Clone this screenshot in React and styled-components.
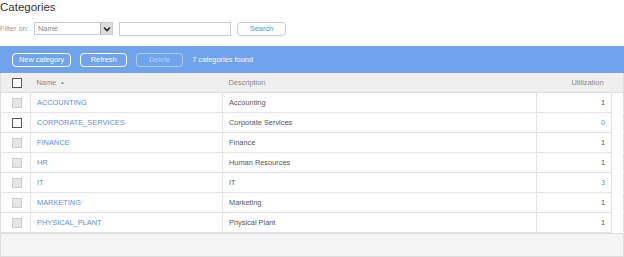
import React from "react";
import styled, { createGlobalStyle } from "styled-components";

const categories = [
  { name: "ACCOUNTING", desc: "Accounting", use: 1, active: false },
  { name: "CORPORATE_SERVICES", desc: "Corporate Services", use: 0, active: true },
  { name: "FINANCE", desc: "Finance", use: 1, active: false },
  { name: "HR", desc: "Human Resources", use: 1, active: false },
  { name: "IT", desc: "IT", use: 3, active: false },
  { name: "MARKETING", desc: "Marketing", use: 1, active: false },
  { name: "PHYSICAL_PLANT", desc: "Physical Plant", use: 1, active: false },
];

const App = () => {
  return (
    <>
      <Global />
      <Page>
        <Title>Categories</Title>
        <FilterRow>
          <FilterLabel>Filter on:</FilterLabel>
          <SelectBox>
            <SelectText>Name</SelectText>
            <SelectBtn>
              <svg width="8" height="6" viewBox="0 0 8 6">
                <path d="M1 1.5 L4 4.5 L7 1.5" fill="none" stroke="#222" strokeWidth="1.6" />
              </svg>
            </SelectBtn>
          </SelectBox>
          <TextInput />
          <SearchBtn>Search</SearchBtn>
        </FilterRow>

        <Toolbar>
          <ToolBtn>New category</ToolBtn>
          <ToolBtn>Refresh</ToolBtn>
          <ToolBtn disabled>Delete</ToolBtn>
          <Found>7 categories found</Found>
        </Toolbar>

        <Grid>
          <colgroup>
            <col style={{ width: 30 }} />
            <col style={{ width: 192 }} />
            <col style={{ width: 314 }} />
            <col style={{ width: 75 }} />
            <col />
          </colgroup>
          <thead>
            <tr>
              <Th>
                <Check $on />
              </Th>
              <Th>
                Name <Arrow>▲</Arrow>
              </Th>
              <Th>Description</Th>
              <Th $right>Utilization</Th>
              <Th />
            </tr>
          </thead>
          <tbody>
            {categories.map((c) => (
              <tr key={c.name}>
                <Td>
                  <Check $on={c.active} />
                </Td>
                <Td $link>{c.name}</Td>
                <Td>{c.desc}</Td>
                <Td $right $link={c.use !== 1}>
                  {c.use}
                </Td>
                <Filler />
              </tr>
            ))}
          </tbody>
        </Grid>
        <Footer />
      </Page>
    </>
  );
};

export default App;
//
const Global = createGlobalStyle`
  body {
    margin: 0;
    background: #fff;
    font-family: "Liberation Sans", Arial, sans-serif;
  }
`;
const Page = styled.div`
  width: 624px;
`;
const Title = styled.h1`
  margin: 0;
  font-size: 11.5px;
  font-weight: normal;
  line-height: 15px;
  color: #333;
`;
const FilterRow = styled.div`
  display: flex;
  align-items: center;
  height: 15px;
  margin-top: 6px;
  font-size: 7.4px;
`;
const FilterLabel = styled.span`
  width: 34px;
  flex-shrink: 0;
  white-space: nowrap;
  color: #999;
`;
const SelectBox = styled.div`
  width: 79px;
  height: 13px;
  border: 1px solid #ccc;
  box-sizing: border-box;
  display: flex;
  align-items: center;
  justify-content: space-between;
`;
const SelectText = styled.span`
  padding-left: 3px;
  color: #888;
`;
const SelectBtn = styled.span`
  width: 11px;
  height: 11px;
  background: #ddd;
  border-left: 1px solid #aaa;
  display: flex;
  align-items: center;
  justify-content: center;
`;
const TextInput = styled.div`
  margin-left: 6px;
  width: 112px;
  height: 14px;
  box-sizing: border-box;
  border: 1px solid #ccc;
`;
const SearchBtn = styled.button`
  margin-left: 6px;
  width: 49px;
  height: 14px;
  padding: 0;
  background: #fff;
  border: 1px solid #ccc;
  border-radius: 4px;
  color: #5b8fe0;
  font-family: inherit;
  font-size: 7.4px;
`;
const Toolbar = styled.div`
  margin-top: 10px;
  height: 27px;
  background: #6fa3eb;
  display: flex;
  align-items: center;
  gap: 9px;
  padding: 0 12px;
`;
const ToolBtn = styled.button`
  height: 14px;
  padding: 0 6px;
  min-width: 47px;
  background: transparent;
  border: 1px solid ${(p) => (p.disabled ? "rgba(255,255,255,0.45)" : "#fff")};
  border-radius: 4px;
  color: ${(p) => (p.disabled ? "rgba(255,255,255,0.5)" : "#fff")};
  font-family: inherit;
  font-size: 7.4px;
  line-height: 12px;
`;
const Found = styled.span`
  color: #fff;
  font-size: 7.4px;
`;
const Grid = styled.table`
  width: 624px;
  table-layout: fixed;
  border-collapse: collapse;
  font-size: 7.4px;
  color: #555;
  border-left: 1px solid #ddd;
  border-right: 1px solid #ddd;
`;
const Th = styled.th`
  height: 19px;
  padding: 0 8px 0 6px;
  background: #efefef;
  border-bottom: 1px solid #ddd;
  font-weight: normal;
  color: #888;
  text-align: ${(p) => (p.$right ? "right" : "left")};
  &:first-child {
    padding-left: 11px;
  }
`;
const Arrow = styled.span`
  font-size: 4.5px;
  vertical-align: 1px;
  margin-left: 2px;
`;
const Td = styled.td`
  height: 19px;
  padding: 0 6px;
  border-bottom: 1px solid #e3e3e3;
  border-right: 1px solid #e3e3e3;
  color: ${(p) => (p.$link ? "#5b8fe0" : "#555")};
  text-align: ${(p) => (p.$right ? "right" : "left")};
  white-space: nowrap;
  &:first-child {
    padding-left: 11px;
  }
`;
const Filler = styled.td`
  border-bottom: 1px solid #fff;
`;
const Check = styled.span`
  display: block;
  width: 10px;
  height: 10px;
  box-sizing: border-box;
  border: 1px solid ${(p) => (p.$on ? "#555" : "#ccc")};
  background: ${(p) => (p.$on ? "#fff" : "#e6e6e6")};
`;
const Footer = styled.div`
  height: 24px;
  background: #f5f5f5;
  border: 1px solid #ddd;
  box-sizing: border-box;
`;
